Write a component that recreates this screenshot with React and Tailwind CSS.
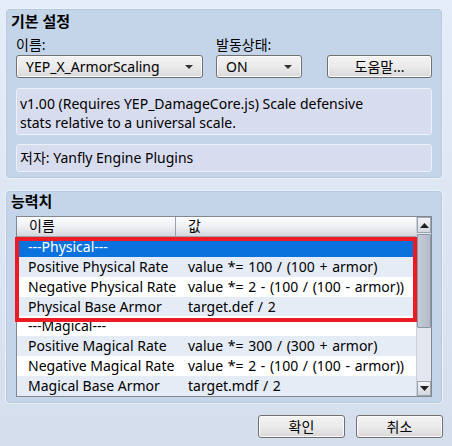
import React from "react";

const font = { fontFamily: '"Noto Sans", "Noto Sans CJK KR", sans-serif' };

function Caret() {
  return (
    <svg width="8" height="4" viewBox="0 0 8 4" className="shrink-0">
      <path d="M0 0 L8 0 L4 4 Z" fill="#303030" />
    </svg>
  );
}

function Combo({ text, className }) {
  return (
    <div
      className={
        "h-[23px] flex items-center justify-between pl-[9px] pr-[9px] rounded-[3px] border border-[#707070] bg-gradient-to-b from-[#f3f3f3] via-[#ebebeb] to-[#d8d8d8] shadow-[inset_0_0_0_1px_#fbfbfb] text-black " +
        className
      }
    >
      <span>{text}</span>
      <Caret />
    </div>
  );
}

function Button({ text, className }) {
  return (
    <div
      className={
        "h-[23px] flex items-center justify-center rounded-[3px] border border-[#707070] bg-gradient-to-b from-[#f3f3f3] via-[#ebebeb] to-[#d8d8d8] shadow-[inset_0_0_0_1px_#fbfbfb] text-black " +
        className
      }
    >
      {text}
    </div>
  );
}

const rows = [
  ["---Physical---", "", true],
  ["Positive Physical Rate", "value *= 100 / (100 + armor)"],
  ["Negative Physical Rate", "value *= 2 - (100 / (100 - armor))"],
  ["Physical Base Armor", "target.def / 2"],
  ["---Magical---", ""],
  ["Positive Magical Rate", "value *= 300 / (300 + armor)"],
  ["Negative Magical Rate", "value *= 2 - (100 / (100 - armor))"],
  ["Magical Base Armor", "target.mdf / 2"],
];

function ArrowUp() {
  return (
    <svg width="9" height="5" viewBox="0 0 9 5">
      <path d="M0 5 L9 5 L4.5 0 Z" fill="#202020" />
    </svg>
  );
}
function ArrowDown() {
  return (
    <svg width="9" height="5" viewBox="0 0 9 5">
      <path d="M0 0 L9 0 L4.5 5 Z" fill="#202020" />
    </svg>
  );
}

export default function App() {
  return (
    <div
      style={font}
      className="w-[452px] h-[446px] overflow-hidden bg-gradient-to-b from-[#e5edf9] to-[#d5deed] pt-[8px] pl-[5px] pr-[9px] text-[14px] text-black leading-none"
    >
      {/* 기본 설정 */}
      <div className="h-[171px] rounded-[5px] border border-[#eaf1fa] bg-[#c4d5ea] shadow-[inset_0_0_0_1px_#b6c9e0] flex flex-col">
        <div className="mt-[3px] ml-[5px] h-[18px] flex items-center text-[15px] font-bold">기본 설정</div>
        <div className="mt-[7px] ml-[10px] h-[16px] flex items-center">
          <span className="w-[200px]">이름:</span>
          <span>발동상태:</span>
        </div>
        <div className="mt-[2px] ml-[10px] flex">
          <Combo text="YEP_X_ArmorScaling" className="w-[187px]" />
          <Combo text="ON" className="w-[86px] ml-[13px]" />
          <Button text="도움말..." className="w-[105px] ml-[25px]" />
        </div>
        <div className="mt-[10px] ml-[10px] w-[416px] h-[47px] rounded-[3px] border border-[#eef1fa] bg-[#d8dcef] pl-[3px] pt-[5px] leading-[19px]">
          <div>v1.00 (Requires YEP_DamageCore.js) Scale defensive</div>
          <div>stats relative to a universal scale.</div>
        </div>
        <div className="mt-[9px] ml-[10px] w-[416px] h-[28px] rounded-[3px] border border-[#eef1fa] bg-[#d8dcef] pl-[3px] flex items-center">
          저자: Yanfly Engine Plugins
        </div>
      </div>

      {/* 능력치 */}
      <div className="mt-[11px] h-[214px] rounded-[5px] border border-[#eaf1fa] bg-[#c4d5ea] shadow-[inset_0_0_0_1px_#b6c9e0] flex flex-col">
        <div className="mt-[1px] ml-[5px] h-[18px] flex items-center text-[15px] font-bold">능력치</div>
        <div className="mt-[6px] ml-[10px] w-[416px] h-[181px] border border-[#828790] bg-white flex">
          <div className="flex-1 flex flex-col relative">
            <div className="h-[20px] flex bg-gradient-to-b from-[#fbfcfd] via-[#eef0f3] to-[#d3d8de] border-b border-[#a0a6ae]">
              <div className="w-[159px] border-r border-[#9aa0a8] pl-[12px] flex items-center">이름</div>
              <div className="flex-1 pl-[12px] flex items-center">값</div>
            </div>
            {rows.map(([name, value, sel], i) => (
              <div
                key={i}
                className={
                  "h-[20px] flex items-center " +
                  (sel
                    ? "bg-[#0a72dc] text-white"
                    : i % 2 === 1
                    ? "bg-[#e5ecf6]"
                    : "bg-white")
                }
              >
                <div className="w-[159px] pl-[11px] whitespace-nowrap">{name}</div>
                <div className="flex-1 pl-[12px] whitespace-nowrap [word-spacing:1px]">{value}</div>
              </div>
            ))}
            {/* red annotation */}
            <div className="absolute left-[-2px] top-[20px] w-[402px] h-[85px] border-[4.5px] border-[#ed1c24] pointer-events-none" />
          </div>
          <div className="w-[15px] flex flex-col bg-[#e3e7ef] border-l border-[#c9ceda]">
            <div className="h-[16px] flex items-center justify-center border border-[#9ca4b0] bg-gradient-to-b from-[#f2f3f5] to-[#d3d7de]">
              <ArrowUp />
            </div>
            <div className="mt-[1px] h-[94px] rounded-[1px] border border-[#8d96a3] bg-gradient-to-r from-[#c6ccd7] via-[#bcc3cf] to-[#b4bcc9]" />
            <div className="flex-1" />
            <div className="h-[15px] flex items-center justify-center border border-[#9ca4b0] bg-gradient-to-b from-[#f2f3f5] to-[#d3d7de]">
              <ArrowDown />
            </div>
          </div>
        </div>
      </div>

      {/* buttons */}
      <div className="mt-[11px] flex justify-end gap-[11px]">
        <Button text="확인" className="w-[87px]" />
        <Button text="취소" className="w-[87px]" />
      </div>
    </div>
  );
}
